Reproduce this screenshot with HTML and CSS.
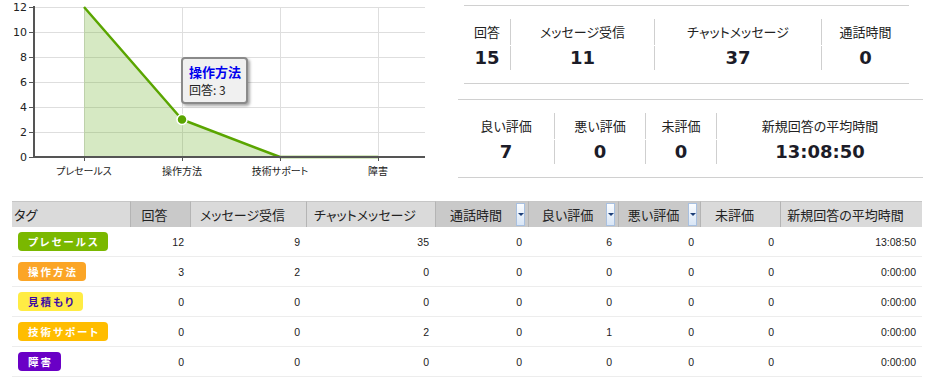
FILE: index.html
```html
<!DOCTYPE html>
<html lang="ja">
<head>
    <meta charset="UTF-8">
    <title>タグ別レポート</title>
    <link rel="stylesheet" href="styles.css">
</head>
<body>
    <div class="top">
        <div class="chart">
            <svg width="430" height="180" viewBox="0 0 430 180">
                <g class="grid">
                    <line x1="34" y1="7.5" x2="425" y2="7.5"/>
                    <line x1="34" y1="32.5" x2="425" y2="32.5"/>
                    <line x1="34" y1="57.5" x2="425" y2="57.5"/>
                    <line x1="34" y1="82.5" x2="425" y2="82.5"/>
                    <line x1="34" y1="107.5" x2="425" y2="107.5"/>
                    <line x1="34" y1="132.5" x2="425" y2="132.5"/>
                    <line x1="84.5" y1="7" x2="84.5" y2="157"/>
                    <line x1="182.5" y1="7" x2="182.5" y2="157"/>
                    <line x1="280.5" y1="7" x2="280.5" y2="157"/>
                    <line x1="378.5" y1="7" x2="378.5" y2="157"/>
                </g>
                <polygon class="area" points="84,7 182,119.5 280,157 378,157 84,157"/>
                <polyline class="series" points="84,7 182,119.5 280,157 378,157"/>
                <path class="axis" d="M34 6V157H425"/>
                <path class="ticks" d="M29 7.5H34M29 32.5H34M29 57.5H34M29 82.5H34M29 107.5H34M29 132.5H34M29 157.5H34M84.5 157V161M182.5 157V161M280.5 157V161M378.5 157V161"/>
                <g class="y-labels">
                    <text x="27" y="11">12</text>
                    <text x="27" y="36">10</text>
                    <text x="27" y="61">8</text>
                    <text x="27" y="86">6</text>
                    <text x="27" y="111">4</text>
                    <text x="27" y="136">2</text>
                    <text x="27" y="161">0</text>
                </g>
                <g class="x-labels">
                    <text x="84" y="175">プレセールス</text>
                    <text x="182" y="175">操作方法</text>
                    <text x="280" y="175">技術サポート</text>
                    <text x="378" y="175">障害</text>
                </g>
                <circle class="point" cx="182" cy="119.5" r="5"/>
            </svg>
            <div class="tip">
                <div class="tip-title">操作方法</div>
                <div>回答: 3</div>
            </div>
        </div>

        <div class="stats">
            <div class="stat-group g1">
                <div class="stat" style="width: 46px;"><div class="stat-label">回答</div><div class="stat-value">15</div></div>
                <div class="stat" style="width: 144px;"><div class="stat-label">メッセージ受信</div><div class="stat-value">11</div></div>
                <div class="stat" style="width: 167px;"><div class="stat-label">チャットメッセージ</div><div class="stat-value">37</div></div>
                <div class="stat" style="width: 88px;"><div class="stat-label">通話時間</div><div class="stat-value">0</div></div>
            </div>
            <div class="stat-group g2">
                <div class="stat" style="width: 96px;"><div class="stat-label">良い評価</div><div class="stat-value">7</div></div>
                <div class="stat" style="width: 91px;"><div class="stat-label">悪い評価</div><div class="stat-value">0</div></div>
                <div class="stat" style="width: 71px;"><div class="stat-label">未評価</div><div class="stat-value">0</div></div>
                <div class="stat" style="width: 207px;"><div class="stat-label">新規回答の平均時間</div><div class="stat-value">13:08:50</div></div>
            </div>
        </div>
    </div>

    <table class="tags">
        <colgroup>
            <col style="width: 118px;">
            <col style="width: 60px;">
            <col style="width: 116px;">
            <col style="width: 129px;">
            <col style="width: 93px;">
            <col style="width: 90px;">
            <col style="width: 82px;">
            <col style="width: 80px;">
            <col style="width: 142px;">
        </colgroup>
        <thead>
            <tr>
                <th class="tag-head"><div class="hd">タグ</div></th>
                <th class="dark"><div class="hd"><span class="hd-text">回答</span><span class="sort"></span></div></th>
                <th><div class="hd"><span class="hd-text">メッセージ受信</span><span class="sort"></span></div></th>
                <th><div class="hd"><span class="hd-text">チャットメッセージ</span><span class="sort"></span></div></th>
                <th class="dark"><div class="hd"><span class="hd-text">通話時間</span><span class="sort on"></span></div></th>
                <th class="dark"><div class="hd"><span class="hd-text">良い評価</span><span class="sort on"></span></div></th>
                <th class="dark"><div class="hd"><span class="hd-text">悪い評価</span><span class="sort on"></span></div></th>
                <th><div class="hd"><span class="hd-text">未評価</span><span class="sort"></span></div></th>
                <th><div class="hd"><span class="hd-text">新規回答の平均時間</span><span class="sort"></span></div></th>
            </tr>
        </thead>
        <tbody>
            <tr>
                <td><span class="badge presales">プレセールス</span></td>
                <td>12</td><td>9</td><td>35</td><td>0</td><td>6</td><td>0</td><td>0</td><td>13:08:50</td>
            </tr>
            <tr>
                <td><span class="badge howto">操作方法</span></td>
                <td>3</td><td>2</td><td>0</td><td>0</td><td>0</td><td>0</td><td>0</td><td>0:00:00</td>
            </tr>
            <tr>
                <td><span class="badge estimate">見積もり</span></td>
                <td>0</td><td>0</td><td>0</td><td>0</td><td>0</td><td>0</td><td>0</td><td>0:00:00</td>
            </tr>
            <tr>
                <td><span class="badge support">技術サポート</span></td>
                <td>0</td><td>0</td><td>2</td><td>0</td><td>1</td><td>0</td><td>0</td><td>0:00:00</td>
            </tr>
            <tr>
                <td><span class="badge trouble">障害</span></td>
                <td>0</td><td>0</td><td>0</td><td>0</td><td>0</td><td>0</td><td>0</td><td>0:00:00</td>
            </tr>
        </tbody>
    </table>
</body>
</html>
```

FILE: styles.css
```css
body {
    margin: 0;
    padding: 0;
    background-color: #fff;
    color: #222;
    font-family: "Noto Sans CJK JP", "Liberation Sans", sans-serif;
    font-feature-settings: "palt";
}

.top {
    display: flex;
    height: 180px;
}

/* chart */
.chart {
    position: relative;
    width: 458px;
    height: 180px;
}

.chart svg {
    display: block;
}

.grid line {
    stroke: #dedede;
    stroke-width: 1;
}

.area {
    fill: rgba(106, 176, 40, 0.28);
}

.series {
    fill: none;
    stroke: #5aa500;
    stroke-width: 2.5;
    stroke-linejoin: round;
}

.axis {
    fill: none;
    stroke: #555;
    stroke-width: 2;
}

.ticks {
    stroke: #555;
    stroke-width: 1;
}

.point {
    fill: #5aa500;
    stroke: #fff;
    stroke-width: 1.5;
}

.y-labels text {
    font-family: "DejaVu Sans", sans-serif;
    font-size: 11px;
    fill: #222;
    text-anchor: end;
}

.x-labels text {
    font-family: "Noto Sans CJK JP", sans-serif;
    font-size: 10px;
    fill: #222;
    text-anchor: middle;
}

.tip {
    position: absolute;
    left: 181px;
    top: 57px;
    width: 67px;
    height: 47px;
    box-sizing: border-box;
    padding: 4px 0 0 6px;
    background-color: #f0f0f0;
    border: 2px solid #8a8a8a;
    border-radius: 4px;
    box-shadow: 2px 2px 3px rgba(0,0,0,0.35);
    font-size: 12px;
    line-height: 18px;
    color: #222;
}

.tip-title {
    font-weight: bold;
    font-size: 13px;
    color: #0000ee;
}

/* stats */
.stats {
    padding-top: 5px;
}

.stat-group {
    display: flex;
    border-top: 1px solid #d0d0d0;
    border-bottom: 1px solid #d0d0d0;
    padding: 13px 0;
}

.g1 {
    margin-left: 6px;
    width: 445px;
}

.g2 {
    margin-top: 15px;
    width: 465px;
}

.stat {
    box-sizing: border-box;
    text-align: center;
}

.stat + .stat .stat-label,
.stat + .stat .stat-value {
    border-left: 1px solid #cfcfcf;
}

.stat-label {
    height: 26px;
    line-height: 26px;
    font-size: 13px;
    color: #222;
}

.stat-value {
    height: 24px;
    margin-top: 1px;
    line-height: 24px;
    font-family: "DejaVu Sans", sans-serif;
    font-size: 18px;
    font-weight: bold;
    color: #1c1c28;
}

/* table */
.tags {
    margin: 21px 0 0 12px;
    width: 910px;
    table-layout: fixed;
    border-collapse: separate;
    border-spacing: 0;
}

.tags th {
    height: 26px;
    box-sizing: border-box;
    padding: 0;
    background-color: #dadada;
    border-top: 1px solid #c6c6c6;
    border-left: 1px solid #b4b4b4;
    font-weight: normal;
    font-size: 13px;
    color: #222;
}

.tags th.dark {
    background-color: #c9c9c9;
}

.tags th.tag-head {
    border-left: none;
    text-align: left;
}

.hd {
    display: flex;
    align-items: center;
    height: 25px;
    padding-left: 2px;
    white-space: nowrap;
}

.hd-text {
    flex: 1;
    text-align: center;
}

.sort {
    width: 9px;
    height: 23px;
    margin: 0 3px 0 2px;
    box-sizing: border-box;
}

.sort.on {
    position: relative;
    background: linear-gradient(#fbfdff, #d9e6f6);
    border: 1px solid #a8c0e0;
}

.sort.on::after {
    content: "";
    position: absolute;
    left: 1px;
    top: 9px;
    border-left: 3px solid transparent;
    border-right: 3px solid transparent;
    border-top: 3px solid #1d3f78;
}

.tags td {
    height: 30px;
    box-sizing: border-box;
    padding: 0 6px 0 0;
    border-bottom: 1px solid #ededed;
    text-align: right;
    font-family: "Liberation Sans", sans-serif;
    font-size: 10.5px;
    color: #222;
}

.tags td:first-child {
    padding-left: 6px;
    text-align: left;
}

.badge {
    display: inline-block;
    height: 19px;
    line-height: 19px;
    padding: 0 8px 0 10px;
    border-radius: 4px;
    vertical-align: middle;
    font-family: "Noto Sans CJK JP", sans-serif;
    font-size: 10.5px;
    font-weight: bold;
    letter-spacing: 2px;
    color: #fff;
}

.presales { background-color: #7ab800; }
.howto { background-color: #fba526; }
.estimate { background-color: #ffec44; color: #3a08a8; }
.support { background-color: #ffbd00; }
.trouble { background-color: #6a00c6; }
```
